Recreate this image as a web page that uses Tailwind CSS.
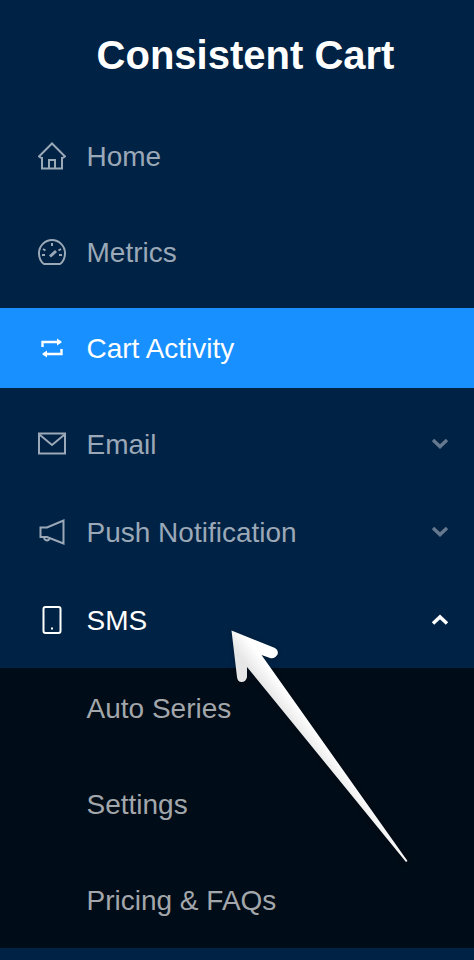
<!DOCTYPE html>
<html lang="en">

<head>
    <meta charset="UTF-8">
    <meta name="viewport" content="width=device-width, initial-scale=1.0">
    <title>Consistent Cart</title>
    <script src="https://cdn.jsdelivr.net/npm/@tailwindcss/browser@4"></script>
</head>

<body class="bg-[#002140]">
    <div class="relative w-[474px] h-[960px] overflow-hidden bg-[#002244] font-['Liberation_Sans',Arial,sans-serif] text-[28px] text-[#9ba8b7]">
        <!-- logo -->
        <div class="h-[116px] pt-[32px] pl-[17px] text-center text-[40px] leading-[46px] font-bold text-white">Consistent Cart</div>

        <!-- top level links -->
        <nav class="flex flex-col gap-[16px]">
            <a class="flex items-center h-[80px] pl-[38px]">
                <svg class="w-[28px] h-[28px] mr-[20.5px]" viewBox="0 0 28 28" fill="none" stroke="currentColor" stroke-width="2">
                    <path d="M1 14.500 14 1.500l13 13-2.500 1.500H24v10.500H4V16H3.500z" />
                    <path d="M11 26.500V18h6v8.500" />
                </svg>
                <span class="pt-[2px]">Home</span>
            </a>
            <a class="flex items-center h-[80px] pl-[38px]">
                <svg class="w-[28px] h-[28px] mr-[20.5px]" viewBox="0 0 28 28" fill="none" stroke="currentColor" stroke-width="2">
                    <path d="M6 26C3 24 1 20 1 15 1 8 7 2 14 2s13 6 13 13c0 5-2 9-5 11z" />
                    <path d="M14 5v3M5 11l2.500 1.500M23 11l-2.500 1.500M4 17h3M21 17h3" />
                    <path d="M12 18.500 18 13" stroke-width="3" />
                </svg>
                <span class="pt-[2px]">Metrics</span>
            </a>
            <a class="flex items-center h-[80px] pl-[38px] bg-[#1890ff] text-white">
                <svg class="w-[28px] h-[28px] mr-[20.5px]" viewBox="0 0 28 28" fill="none" stroke="currentColor" stroke-width="2.400">
                    <path d="M4.500 13V8h18" />
                    <path d="M23.500 15v5h-18" />
                    <path d="M19 4.500 24 8l-5 3.500zM9 16.500 4 20l5 3.500z" fill="currentColor" stroke="none" />
                </svg>
                <span class="pt-[2px]">Cart Activity</span>
            </a>
        </nav>

        <!-- submenus -->
        <div class="flex flex-col gap-[8px] mt-[16px]">
            <a class="flex items-center h-[80px] pl-[38px] pr-[25px]">
                <svg class="w-[28px] h-[28px] mr-[20.5px]" viewBox="0 0 28 28" fill="none" stroke="currentColor" stroke-width="2">
                    <path d="M1 3.500h26v20H1zM2 5l12 10L26 5" />
                </svg>
                <span class="flex-1 pt-[2px]">Email</span>
                <svg class="w-[18px] h-[12px] text-[#66788e]" viewBox="0 0 18 12" fill="none" stroke="currentColor" stroke-width="3.500">
                    <path d="M2 2 9 8.500 16 2" />
                </svg>
            </a>
            <a class="flex items-center h-[80px] pl-[38px] pr-[25px]">
                <svg class="w-[28px] h-[28px] mr-[20.5px]" viewBox="0 0 28 28" fill="none" stroke="currentColor" stroke-width="2">
                    <path d="M25.500 2.500v23L9 19H2.500v-9.500H9z" />
                    <path d="M6 19.500a3 3 0 0 0 5.500 1.500" />
                </svg>
                <span class="flex-1 pt-[2px]">Push Notification</span>
                <svg class="w-[18px] h-[12px] text-[#66788e]" viewBox="0 0 18 12" fill="none" stroke="currentColor" stroke-width="3.500">
                    <path d="M2 2 9 8.500 16 2" />
                </svg>
            </a>
            <a class="flex items-center h-[80px] pl-[38px] pr-[25px] text-white">
                <svg class="w-[28px] h-[28px] mr-[20.5px]" viewBox="0 0 28 28" fill="none" stroke="currentColor" stroke-width="2">
                    <rect x="5.500" y="1" width="17" height="26" rx="2" />
                    <rect x="13" y="21.500" width="2" height="2" fill="currentColor" stroke="none" />
                </svg>
                <span class="flex-1 pt-[2px]">SMS</span>
                <svg class="w-[18px] h-[12px]" viewBox="0 0 18 12" fill="none" stroke="currentColor" stroke-width="3.500">
                    <path d="M2 9.500 9 3l7 6.500" />
                </svg>
            </a>
        </div>

        <!-- sms items -->
        <div class="flex flex-col gap-[16px] mt-[8px] pb-[8px] bg-[#000c17] text-[#a3a7ab]">
            <a class="flex items-center h-[80px] pl-[86.5px] pt-[2px]">Auto Series</a>
            <a class="flex items-center h-[80px] pl-[86.5px] pt-[2px]">Settings</a>
            <a class="flex items-center h-[80px] pl-[86.5px] pt-[2px]">Pricing &amp; FAQs</a>
        </div>

        <!-- annotation arrow -->
        <svg class="absolute inset-0 drop-shadow-[0_1px_2px_rgba(0,0,0,0.25)]" width="474" height="960" viewBox="0 0 474 960">
            <defs>
                <linearGradient id="arrowFill" gradientUnits="userSpaceOnUse" x1="244" y1="662" x2="268" y2="644">
                    <stop offset="0" stop-color="#e6e6e6" />
                    <stop offset="0.55" stop-color="#ffffff" />
                </linearGradient>
            </defs>
            <path fill="url(#arrowFill)" d="M231.500 630.500 275 648Q279 650.500 277.500 654.500 275 659 270 658L261.500 655 407.500 861 406 862 247 667V677Q246 682 241.500 682 237.500 682 237 677Z" />
        </svg>
    </div>
</body>

</html>
